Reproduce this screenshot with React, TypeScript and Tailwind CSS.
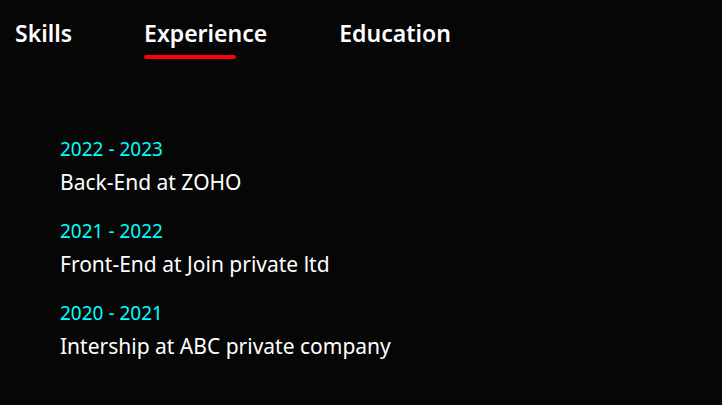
import React, { useState } from "react";

const tabs = ["Skills", "Experience", "Education"];

const experience = [
    { years: "2022 - 2023", title: "Back-End at ZOHO" },
    { years: "2021 - 2022", title: "Front-End at Join private ltd" },
    { years: "2020 - 2021", title: "Intership at ABC private company" },
];

export default function App() {
    const [active, setActive] = useState("Experience");

    return (
        <div className="w-[722px] h-[405px] bg-[#060606] text-white font-['Noto_Sans',sans-serif] overflow-hidden">
            <div className="flex gap-[72px] pl-[15px] pt-[14px]">
                {tabs.map((tab) => (
                    <button
                        key={tab}
                        onClick={() => setActive(tab)}
                        className="flex flex-col items-start text-[23px] font-semibold leading-[38px]"
                    >
                        {tab}
                        <span
                            className={
                                active === tab
                                    ? "w-3/4 h-[4px] rounded-full bg-[#ff0000] mt-[3px]"
                                    : "w-3/4 h-[4px] mt-[3px]"
                            }
                        />
                    </button>
                ))}
            </div>
            <div className="pl-[60px] pt-[77px] flex flex-col gap-[16px]">
                {experience.map((item) => (
                    <div key={item.years} className="flex flex-col">
                        <span className="text-[#00ffff] text-[19px] leading-[26px]">{item.years}</span>
                        <span className="text-[21px] leading-[40px]">{item.title}</span>
                    </div>
                ))}
            </div>
        </div>
    );
}
